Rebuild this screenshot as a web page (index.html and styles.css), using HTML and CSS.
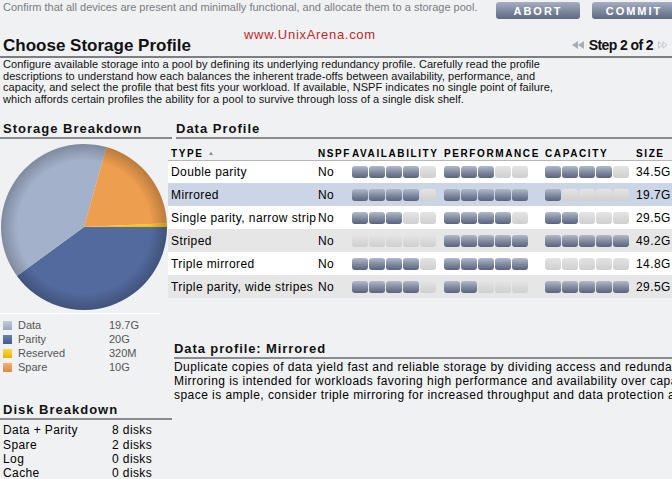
FILE: index.html
```html
<!DOCTYPE html>
<html lang="en">
<head>
  <meta charset="UTF-8" />
  <title>Choose Storage Profile</title>
  <link rel="stylesheet" href="styles.css">
</head>
<body>
  <div class="page">
    <div class="topbar">
      <p class="hint">Confirm that all devices are present and minimally functional, and allocate them to a storage pool.</p>
      <div class="actions">
        <button class="btn">ABORT</button>
        <button class="btn">COMMIT</button>
      </div>
    </div>

    <div class="titlebar">
      <h1>Choose Storage Profile</h1>
      <span class="watermark">www.UnixArena.com</span>
      <div class="step">
        <svg width="12" height="8" viewBox="0 0 12 8"><path d="M0 4 L6 0 V8 Z M6 4 L12 0 V8 Z" fill="#a9adb4"/></svg>
        <span>Step 2 of 2</span>
        <svg width="10" height="8" viewBox="0 0 10 8"><path d="M0.5 0.8 L4.5 4 L0.5 7.2 Z M5 0.8 L9 4 L5 7.2 Z" fill="none" stroke="#c4c7cc" stroke-width="1"/></svg>
      </div>
    </div>

    <p class="intro">
      Configure available storage into a pool by defining its underlying redundancy profile. Carefully read the profile<br>
      descriptions to understand how each balances the inherent trade-offs between availability, performance, and<br>
      capacity, and select the profile that best fits your workload. If available, NSPF indicates no single point of failure,<br>
      which affords certain profiles the ability for a pool to survive through loss of a single disk shelf.
    </p>

    <div class="main">
      <div class="side">
        <h2>Storage Breakdown</h2>
        <svg class="pie" width="170" height="168" viewBox="0 0 170 168">
          <defs>
            <radialGradient id="shade" cx="84" cy="84" r="83" gradientUnits="userSpaceOnUse">
              <stop offset="0.8" stop-color="#000" stop-opacity="0"/>
              <stop offset="1" stop-color="#000" stop-opacity="0.22"/>
            </radialGradient>
          </defs>
          <path d="M84 84 L167 84 A83 83 0 0 1 16.94 132.9 Z" fill="#536a9e"/>
          <path d="M84 84 L16.94 132.9 A83 83 0 0 1 106.46 4.1 Z" fill="#a3b1cb"/>
          <path d="M84 84 L106.46 4.1 A83 83 0 0 1 166.8 80.2 Z" fill="#ee9e4f"/>
          <path d="M84 84 L166.8 80.2 A83 83 0 0 1 167 84 Z" fill="#f6c21c"/>
          <circle cx="84" cy="84" r="83" fill="url(#shade)"/>
        </svg>
        <ul class="legend">
          <li><i class="sw data"></i><span>Data</span><span>19.7G</span></li>
          <li><i class="sw parity"></i><span>Parity</span><span>20G</span></li>
          <li><i class="sw reserved"></i><span>Reserved</span><span>320M</span></li>
          <li><i class="sw spare"></i><span>Spare</span><span>10G</span></li>
        </ul>

        <h2>Disk Breakdown</h2>
        <ul class="disks">
          <li><span>Data + Parity</span><span>8 disks</span></li>
          <li><span>Spare</span><span>2 disks</span></li>
          <li><span>Log</span><span>0 disks</span></li>
          <li><span>Cache</span><span>0 disks</span></li>
        </ul>
      </div>

      <div class="content">
        <h2>Data Profile</h2>
        <table class="profiles">
          <colgroup>
            <col style="width:147px"><col style="width:34px"><col style="width:92px"><col style="width:101px"><col style="width:91px"><col>
          </colgroup>
          <thead>
            <tr><th>TYPE <small>&#9650;</small></th><th>NSPF</th><th>AVAILABILITY</th><th>PERFORMANCE</th><th>CAPACITY</th><th>SIZE</th></tr>
          </thead>
          <tbody id="rows"></tbody>
        </table>

        <h2 class="detail-title">Data profile: Mirrored</h2>
        <p class="detail">
          Duplicate copies of data yield fast and reliable storage by dividing access and redundancy evenly between two sets of disks.<br>
          Mirroring is intended for workloads favoring high performance and availability over capacity. If storage<br>
          space is ample, consider triple mirroring for increased throughput and data protection at the cost of reduced capacity.
        </p>
      </div>
    </div>
  </div>

  <script>
    const profiles = [
      ['Double parity', 4, 3, 4, '34.5G'],
      ['Mirrored', 4, 5, 1, '19.7G', 'selected'],
      ['Single parity, narrow stripes', 3, 4, 2, '29.5G'],
      ['Striped', 0, 5, 5, '49.2G'],
      ['Triple mirrored', 4, 5, 0, '14.8G'],
      ['Triple parity, wide stripes', 4, 2, 5, '29.5G']
    ];

    function meter(n) {
      let html = '<div class="meter">';
      for (let i = 0; i < 5; i++) {
        html += `<span class="seg${i < n ? ' on' : ''}"></span>`;
      }
      return html + '</div>';
    }

    const body = document.getElementById('rows');
    profiles.forEach(p => {
      const tr = document.createElement('tr');
      if (p[5]) tr.className = p[5];
      tr.innerHTML = `<td class="type"><div>${p[0]}</div></td><td>No</td><td>${meter(p[1])}</td><td>${meter(p[2])}</td><td>${meter(p[3])}</td><td>${p[4]}</td>`;
      body.appendChild(tr);
    });
  </script>
</body>
</html>
```

FILE: styles.css
```css
* { box-sizing: border-box; }
html, body { overflow: hidden; }
body {
  margin: 0;
  background: #f0f1f3;
  font-family: "Liberation Sans", Arial, sans-serif;
  color: #000;
}
.page { width: 740px; }

.topbar {
  display: flex;
  justify-content: space-between;
  align-items: flex-start;
  height: 20px;
  padding-left: 3px;
}
.hint { margin: 1px 0 0; font-size: 11px; line-height: 13px; color: #7a7c80; }
.actions { display: flex; gap: 12px; padding-right: 64px; padding-top: 2px; }
.btn {
  width: 84px; height: 17px;
  border: none; border-radius: 3px;
  background: linear-gradient(#a7afc0, #7c879d 55%, #5f6a82);
  color: #fff; font: bold 11px "Liberation Sans", Arial, sans-serif;
  letter-spacing: 2px;
  padding: 0;
}

.titlebar {
  position: relative;
  display: flex;
  justify-content: space-between;
  align-items: flex-end;
  height: 38px;
  padding: 0 4px 0 3px;
  border-bottom: 2px solid #7c7e82;
  margin-right: 68px;
}
h1 { margin: 0; font-size: 17px; font-weight: bold; color: #111; }
.watermark {
  position: absolute; left: 244px; top: 7px;
  font-size: 13px; color: #c0282a; letter-spacing: 0.7px;
}
.step { display: flex; align-items: center; gap: 5px; font-size: 14px; font-weight: bold; color: #111; letter-spacing: -0.6px; padding-bottom: 3px; }

.intro {
  margin: 1px 0 0 3px;
  font-size: 11px;
  line-height: 11.6px;
  letter-spacing: 0.05px;
  color: #111;
}

.main {
  display: grid;
  grid-template-columns: 172px 1fr;
  gap: 4px;
  margin-top: 16px;
}

h2 {
  margin: 0;
  font-size: 13px;
  font-weight: bold;
  letter-spacing: 1px;
  color: #111;
  padding: 0 0 1px 3px;
  border-bottom: 2px solid #8a8c90;
}
.content h2 { padding-left: 0; }

.side .pie { display: block; margin-top: 4px; }
.legend {
  list-style: none; margin: 2px 0 0; padding: 4px 0 0 3px;
  border-top: 1px solid #fff;
  width: 160px;
  font-size: 11px; color: #555;
}
.legend li { display: grid; grid-template-columns: 15px 91px auto; align-items: center; height: 14px; }
.sw { width: 9px; height: 9px; display: block; }
.sw.data { background: linear-gradient(#c3cbdc, #98a6c2); }
.sw.parity { background: linear-gradient(#6b80b0, #435a8c); }
.sw.reserved { background: linear-gradient(#fbd84a, #eab400); }
.sw.spare { background: linear-gradient(#f4b176, #e08640); }

.legend + h2 { margin-top: 28px; }
.disks { list-style: none; margin: 0; padding: 3px 0 0 3px; font-size: 12px; line-height: 14.3px; letter-spacing: 0.4px; }
.disks li { display: grid; grid-template-columns: 109px auto; }

.profiles {
  margin-top: 7px;
  margin-left: -8px;
  border-collapse: collapse;
  table-layout: fixed;
  width: calc(100% + 8px);
  font-size: 12px;
}
.profiles th {
  text-align: left;
  font-size: 10px;
  letter-spacing: 1.6px;
  padding: 1px 0 0 3px;
  height: 14px;
  border-bottom: 1px solid #b5b7bb;
  white-space: nowrap;
}
.profiles th small { font-size: 6px; color: #888; vertical-align: 2px; letter-spacing: 0; }
.profiles td { height: 23px; padding: 0 0 0 3px; white-space: nowrap; background: #fff; letter-spacing: 0.4px; }
.profiles tr:nth-child(even) td { background: #e6e6e6; }
.profiles tr.selected td { background: #ccd5e6; }
.profiles td.type div { width: 145px; overflow: hidden; }

.meter { display: flex; gap: 1px; }
.seg {
  width: 16px; height: 12px; border-radius: 3px;
  background: linear-gradient(#e4e4e4, #cfcfcf);
}
.seg.on { background: linear-gradient(#b2bacb, #7d879e 55%, #59637b); }

.content h2.detail-title { margin: 43px 0 0 -2px; letter-spacing: 0.9px; }
.detail {
  margin: 1px 0 0 -2px;
  font-size: 12px;
  line-height: 14px;
  letter-spacing: 0.45px;
  white-space: nowrap;
}
```
